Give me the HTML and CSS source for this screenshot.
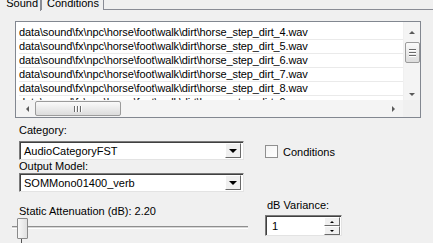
FILE: index.html
```html
<!DOCTYPE html>
<html>
<head>
	<title>Sound</title>
	<link rel="stylesheet" href="styles.css">
</head>
<body>

	<div class="tabs">
		<div class="tab sel">Sound</div>
		<div class="tab">Conditions</div>
	</div>

	<div class="panel">

		<div class="lista">
			<ul class="rows">
				<li>data\sound\fx\npc\horse\foot\walk\dirt\horse_step_dirt_4.wav</li>
				<li>data\sound\fx\npc\horse\foot\walk\dirt\horse_step_dirt_5.wav</li>
				<li>data\sound\fx\npc\horse\foot\walk\dirt\horse_step_dirt_6.wav</li>
				<li>data\sound\fx\npc\horse\foot\walk\dirt\horse_step_dirt_7.wav</li>
				<li>data\sound\fx\npc\horse\foot\walk\dirt\horse_step_dirt_8.wav</li>
				<li>data\sound\fx\npc\horse\foot\walk\dirt\horse_step_dirt_9.wav</li>
			</ul>
			<div class="vscroll">
				<span class="arr up"></span>
				<span class="thumb vthumb"><i></i><i></i><i></i></span>
				<span class="arr down"></span>
			</div>
			<div class="hscroll">
				<span class="arr left"></span>
				<span class="thumb hthumb"><i></i><i></i><i></i></span>
				<span class="arr right"></span>
			</div>
			<div class="corner"></div>
		</div>

		<div class="form">
			<div class="col">
				<p class="lbl">Category:</p>
				<div class="combo"><span>AudioCategoryFST</span><b class="drop"></b></div>
				<p class="lbl">Output Model:</p>
				<div class="combo"><span>SOMMono01400_verb</span><b class="drop"></b></div>
			</div>
			<div class="check"><span class="box"></span>Conditions</div>
		</div>

		<div class="bottom">
			<div class="atten">
				<p class="lbl">Static Attenuation (dB): 2.20</p>
				<div class="slider">
					<div class="track"></div>
					<span class="knob"></span>
				</div>
				<div class="ticks"><i></i></div>
			</div>
			<div class="variance">
				<p class="lbl">dB Variance:</p>
				<div class="spin">
					<span class="val">1</span>
					<div class="btns">
						<b class="sbtn"><i class="up"></i></b>
						<b class="sbtn"><i class="down"></i></b>
					</div>
				</div>
			</div>
		</div>

	</div>

</body>
</html>
```

FILE: styles.css
```css
body{
	margin: 0;
	background: #f0f0f0;
	font-family: "Liberation Sans", Arial, sans-serif;
	font-size: 11px;
	color: #000;
	overflow: hidden;
}

p{
	margin: 0;
}

.tabs{
	display: flex;
	height: 9px;
	position: relative;
	z-index: 2;
}

.tab{
	margin-top: -4px;
	height: 13px;
	line-height: 13px;
	padding: 0 4px 0 5px;
	border: 1px solid #898c95;
	border-bottom: none;
	background: #f0f0f0;
}

.tab.sel{
	width: 38px;
	height: 14px;
	border-left: none;
	padding: 0 2px 0 0;
	text-align: right;
}

.panel{
	border-top: 1px solid #898c95;
	padding-top: 11px;
}

.lista{
	margin-left: 15px;
	width: 404px;
	height: 95px;
	border: 1px solid #828790;
	background: #fff;
	display: grid;
	grid-template-columns: 1fr 17px;
	grid-template-rows: 1fr 17px;
	overflow: hidden;
}

.rows{
	list-style: none;
	margin: 0;
	padding: 4px 0 0 3px;
	overflow: hidden;
	letter-spacing: -0.12px;
}

.rows li{
	height: 13px;
	line-height: 13px;
	border-bottom: 1px solid #eaeaea;
	white-space: nowrap;
}

.vscroll, .hscroll{
	background: #f4f4f4;
	display: flex;
	align-items: center;
	justify-content: space-between;
}

.vscroll{
	flex-direction: column;
	padding: 9px 0 4px;
	border-left: 1px solid #f0f0f0;
}

.hscroll{
	padding: 0 8px 0 10px;
}

.corner{
	background: #f0f0f0;
}

.arr{
	width: 0;
	height: 0;
	border: 3px solid transparent;
}

.arr.up{ border-bottom: 3px solid #5a5a5a; border-top: none; }
.arr.down{ border-top: 3px solid #5a5a5a; border-bottom: none; }
.arr.left{ border-right: 3px solid #5a5a5a; border-left: none; }
.arr.right{ border-left: 3px solid #5a5a5a; border-right: none; }

.thumb{
	border: 1px solid #9b9b9b;
	border-radius: 2px;
	background: linear-gradient(#fafafa, #dcdcdc);
	display: flex;
	align-items: center;
	justify-content: center;
	gap: 1px;
}

.vthumb{
	width: 13px;
	height: 19px;
	flex-direction: column;
	margin-bottom: auto;
	margin-top: 8px;
}

.vthumb i{
	display: block;
	width: 7px;
	height: 1px;
	background: #6a6a6a;
	border-bottom: 1px solid #fff;
}

.hthumb{
	width: 84px;
	height: 13px;
	margin-right: auto;
	margin-left: 6px;
}

.hthumb i{
	display: block;
	width: 1px;
	height: 6px;
	background: #6a6a6a;
	border-right: 1px solid #fff;
}

.form{
	display: flex;
	padding: 6px 0 0 19px;
}

.col{
	width: 225px;
}

.col .lbl{
	height: 13px;
	line-height: 13px;
}

.col .lbl:first-child{
	margin-bottom: 4px;
}

.combo{
	height: 17px;
	border: 1px solid #7a7a7a;
	border-right-color: #e3e3e3;
	border-bottom-color: #e3e3e3;
	box-shadow: inset 1px 1px 0 #404040;
	background: #fff;
	display: flex;
	align-items: center;
	justify-content: space-between;
	padding-left: 4px;
}

.drop{
	width: 14px;
	height: 13px;
	margin-right: 2px;
	background: #f0f0f0;
	border: 1px solid;
	border-color: #fff #6a6a6a #6a6a6a #fff;
	display: flex;
	align-items: center;
	justify-content: center;
}

.drop::after{
	content: "";
	border: 4px solid transparent;
	border-top: 4px solid #000;
	border-bottom: none;
	margin-top: 1px;
}

.check{
	display: flex;
	align-items: center;
	gap: 5px;
	margin: 21px 0 0 21px;
	height: 13px;
}

.box{
	width: 11px;
	height: 11px;
	border: 1px solid #8f8f8f;
	background: linear-gradient(135deg, #f4f4f4, #fff);
}

.bottom{
	display: flex;
	padding-top: 7px;
}

.atten{
	width: 240px;
	padding-left: 12px;
}

.atten .lbl{
	margin: 6px 0 0 7px;
	line-height: 13px;
}

.slider{
	position: relative;
	height: 12px;
	padding-top: 8px;
	width: 236px;
}

.track{
	height: 1px;
	border-top: 1px solid #8e8e8e;
	border-bottom: 1px solid #fff;
	background: #d6d6d6;
}

.knob{
	position: absolute;
	left: 5px;
	top: 0;
	width: 9px;
	height: 19px;
	border: 1px solid #8a8a8a;
	border-radius: 1px;
	background: linear-gradient(90deg, #f8f8f8, #e0e0e0);
}

.ticks i{
	display: block;
	width: 1px;
	height: 4px;
	margin: 1px 0 0 9px;
	background: #555;
}

.variance{
	padding-left: 13px;
}

.variance .lbl{
	line-height: 13px;
	margin-left: 2px;
}

.spin{
	margin-top: 3px;
	width: 69px;
	height: 19px;
	border: 1px solid #7a7a7a;
	border-right-color: #e3e3e3;
	border-bottom-color: #e3e3e3;
	box-shadow: inset 1px 1px 0 #404040;
	background: #fff;
	display: flex;
	justify-content: space-between;
	align-items: center;
	padding-left: 6px;
}

.btns{
	display: flex;
	flex-direction: column;
	align-self: stretch;
	margin: 1px 1px 0 0;
}

.sbtn{
	width: 14px;
	height: 8px;
	background: #f0f0f0;
	border: 1px solid;
	border-color: #fff #6a6a6a #6a6a6a #fff;
	display: flex;
	align-items: center;
	justify-content: center;
}

.sbtn i{
	border: 2px solid transparent;
}

.sbtn .up{ border-bottom: 2px solid #000; border-top: none; }
.sbtn .down{ border-top: 2px solid #000; border-bottom: none; }
```
